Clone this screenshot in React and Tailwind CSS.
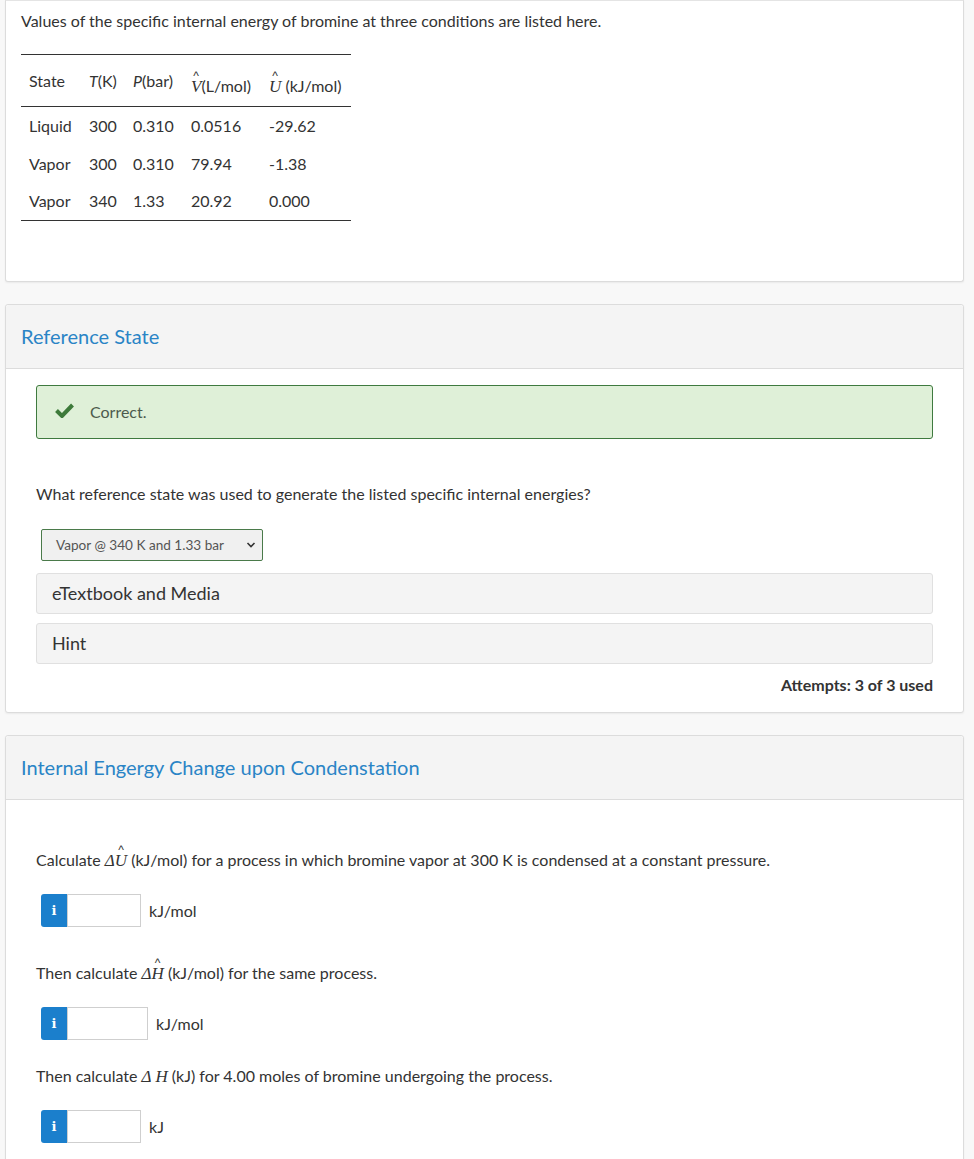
import React from "react";

const font = { fontFamily: "Lato, 'Open Sans', sans-serif" };

function Hat({ children, top = "-top-[5px]" }) {
  return (
    <span className="relative inline-block">
      <span className={"absolute left-1/2 -translate-x-1/2 text-[12px] leading-none not-italic font-['Liberation_Sans'] text-[#333] " + top}>^</span>
      {children}
    </span>
  );
}

function Math({ children }) {
  return <span className="font-['Liberation_Serif',serif] italic text-[17px] leading-none">{children}</span>;
}

function Card({ title, children, className = "" }) {
  return (
    <div className={"ml-[5px] mr-[10px] bg-white border border-[#dcdcdc] rounded-[3px] shadow-[0_1px_2px_rgba(0,0,0,0.06)] " + className}>
      {title && (
        <div className="h-[64px] bg-[#f4f4f4] border-b border-[#dcdcdc] flex items-center px-[15px] rounded-t-[3px]">
          <h2 className="text-[20px] text-[#2a84c6] leading-none pb-[1px]">{title}</h2>
        </div>
      )}
      {children}
    </div>
  );
}

function InfoInput({ width, unit }) {
  return (
    <div className="flex items-center ml-[5px]">
      <div className="w-[26px] h-[33px] bg-[#1b7fcc] rounded-l-[3px] flex items-center justify-center text-white text-[13px] font-bold font-['DejaVu_Serif',serif]">i</div>
      <div className={"h-[33px] border border-[#cfcfcf] bg-white " + width}></div>
      <span className="ml-[8px] text-[16px] text-[#333]">{unit}</span>
    </div>
  );
}

export default function App() {
  const rows = [
    ["Liquid", "300", "0.310", "0.0516", "-29.62"],
    ["Vapor", "300", "0.310", "79.94", "-1.38"],
    ["Vapor", "340", "1.33", "20.92", "0.000"],
  ];
  return (
    <div className="min-h-screen bg-[#f8f8f8] text-[#333] pb-10" style={font}>
      <Card className="h-[282px] rounded-t-none border-t-[#e4e4e4]">
        <div className="px-[15px] pt-[9px]">
          <p className="text-[16px] leading-[22px]">Values of the specific internal energy of bromine at three conditions are listed here.</p>
          <table className="mt-[22px] w-[330px] table-fixed border-collapse text-[16px]">
            <colgroup>
              <col className="w-[60px]" />
              <col className="w-[44px]" />
              <col className="w-[58px]" />
              <col className="w-[78px]" />
              <col className="w-[90px]" />
            </colgroup>
            <thead>
              <tr className="h-[52px] border-t border-b border-[#333]">
                <th className="text-left font-normal pl-[8px]">State</th>
                <th className="text-left font-normal pl-[8px] whitespace-nowrap"><span className="italic">T</span>(K)</th>
                <th className="text-left font-normal pl-[8px] whitespace-nowrap"><span className="italic">P</span>(bar)</th>
                <th className="text-left font-normal pl-[8px] pt-[10px] whitespace-nowrap"><Hat top="-top-[4px]"><Math>V</Math></Hat>(L/mol)</th>
                <th className="text-left font-normal pl-[8px] pt-[10px] whitespace-nowrap"><Hat top="-top-[4px]"><Math>U</Math></Hat> (kJ/mol)</th>
              </tr>
            </thead>
            <tbody>
              {rows.map((r, i) => (
                <tr key={i} className={"h-[38px] " + (i === 2 ? "border-b border-[#333]" : "")}>
                  {r.map((c, j) => (
                    <td key={j} className="pl-[8px] whitespace-nowrap">{c}</td>
                  ))}
                </tr>
              ))}
            </tbody>
          </table>
        </div>
      </Card>

      <Card title="Reference State" className="mt-[22px] h-[409px]">
        <div className="px-[30px] pt-[16px]">
          <div className="h-[54px] bg-[#dff0d8] border border-[#3f7a3f] rounded-[3px] flex items-center pl-[18px]">
            <svg width="19" height="15" viewBox="0 0 19 15" className="mb-[3px]">
              <path d="M1.5 7.5 L7 13 L17.5 2" fill="none" stroke="#3d7a3a" strokeWidth="4" />
            </svg>
            <span className="ml-[16px] text-[16px] text-[#4c5a4c]">Correct.</span>
          </div>
          <p className="mt-[44px] text-[16px] leading-[22px]">What reference state was used to generate the listed specific internal energies?</p>
          <div className="mt-[24px] ml-[5px] w-[222px] h-[32px] bg-[#f0f0f0] border border-[#4a7a4a] rounded-[2px] flex items-center justify-between pl-[14px] pr-[6px]">
            <span className="text-[13.6px] text-[#555]">Vapor @ 340 K and 1.33 bar</span>
            <svg width="10" height="10" viewBox="0 0 10 10"><path d="M1.5 3 L5 6.5 L8.5 3" fill="none" stroke="#333" strokeWidth="1.6" /></svg>
          </div>
          <div className="mt-[12px] h-[41px] bg-[#f4f4f4] border border-[#e0e0e0] rounded-[3px] flex items-center pl-[15px] text-[18px] text-[#333]">eTextbook and Media</div>
          <div className="mt-[9px] h-[41px] bg-[#f4f4f4] border border-[#e0e0e0] rounded-[3px] flex items-center pl-[15px] text-[18px] text-[#333]">Hint</div>
          <p className="mt-[10px] text-right text-[16px] leading-[22px] font-bold text-[#333]">Attempts: 3 of 3 used</p>
        </div>
      </Card>

      <Card title="Internal Engergy Change upon Condenstation" className="mt-[22px] h-[440px]">
        <div className="px-[30px] pt-[49px]">
          <p className="text-[16px] leading-[22px]">
            Calculate <Math>Δ</Math><Hat><Math>U</Math></Hat> (kJ/mol) for a process in which bromine vapor at 300 K is condensed at a constant pressure.
          </p>
          <div className="mt-[23px]"><InfoInput width="w-[74px]" unit="kJ/mol" /></div>
          <p className="mt-[35px] text-[16px] leading-[22px]">
            Then calculate <Math>Δ</Math><Hat><Math>H</Math></Hat> (kJ/mol) for the same process.
          </p>
          <div className="mt-[23px]"><InfoInput width="w-[81px]" unit="kJ/mol" /></div>
          <p className="mt-[25px] text-[16px] leading-[22px]">
            Then calculate <Math>Δ H</Math> (kJ) for 4.00 moles of bromine undergoing the process.
          </p>
          <div className="mt-[23px]"><InfoInput width="w-[74px]" unit="kJ" /></div>
        </div>
      </Card>
    </div>
  );
}
